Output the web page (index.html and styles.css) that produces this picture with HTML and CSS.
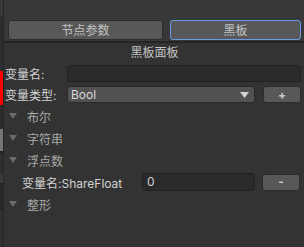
FILE: index.html
```html
<!DOCTYPE html>
<html>
<head>
<meta charset="utf-8">
<link rel="stylesheet" href="styles.css">
</head>
<body>
<div class="app">
  <div class="strip">
    <div class="s s-top"></div>
    <div class="s s-row"></div>
    <div class="s s-row"></div>
    <div class="s s-row"></div>
    <div class="s s-row"></div>
    <div class="s s-row2"></div>
    <div class="s s-red"></div>
    <div class="s s-dark"></div>
    <div class="s s-gray"></div>
    <div class="s s-dark2"></div>
    <div class="s s-mid"></div>
    <div class="s s-dark3"></div>
    <div class="s s-rest"></div>
  </div>
  <div class="main">
    <div class="header">
      <button class="tab tab-node">节点参数</button>
      <button class="tab tab-board active">黑板</button>
    </div>
    <div class="title">黑板面板</div>
    <div class="row row-name">
      <span class="label">变量名:</span>
      <div class="input wide"></div>
    </div>
    <div class="row row-type">
      <span class="label">变量类型:</span>
      <div class="dropdown"><span>Bool</span><svg class="arrow" width="9" height="6" viewBox="0 0 9 6"><path d="M0 0H9L4.5 6Z" fill="#d0d0d0"/></svg></div>
      <button class="btn small">+</button>
    </div>
    <div class="fold first"><span class="tri"></span>布尔</div>
    <div class="fold"><span class="tri"></span>字符串</div>
    <div class="fold"><span class="tri"></span>浮点数</div>
    <div class="row row-var">
      <span class="varlabel">变量名:ShareFloat</span>
      <div class="input value">0</div>
      <button class="btn small minus">-</button>
    </div>
    <div class="fold"><span class="tri"></span>整形</div>
  </div>
</div>
</body>
</html>
```
FILE: styles.css
```css
html, body {
  margin: 0;
  padding: 0;
  width: 304px;
  height: 247px;
  overflow: hidden;
  background: #333333;
  font-family: Inter, "Noto Sans CJK SC", sans-serif;
  font-size: 12px;
  color: #c4c4c4;
}
.app {
  display: flex;
  height: 247px;
}
.strip {
  width: 3px;
  border-right: 1px solid #262626;
  display: flex;
  flex-direction: column;
  flex: none;
}
.s { flex: none; }
.s-top { height: 17px; background: #3a3a3a; border-bottom: 1px solid #262626; }
.s-row { height: 10px; background: #2e2e2e; border-bottom: 1px solid #232323; }
.s-row2 { height: 9px; background: #2e2e2e; }
.s-red { height: 34px; background: #ff0000; }
.s-dark { height: 24px; background: #2b2b2b; }
.s-gray { height: 22px; background: #767676; border-bottom: 2px solid #202020; }
.s-dark2 { height: 20px; background: #2d2d2d; }
.s-mid { height: 10px; background: #3a3a3a; border-bottom: 2px solid #1f1f1f; }
.s-dark3 { height: 24px; background: #2a2a2a; border-bottom: 1px solid #1f1f1f; }
.s-rest { flex: 1; background: #303030; }
.main {
  flex: 1;
  display: flex;
  flex-direction: column;
}
.header {
  background: #383838;
  height: 43px;
  border-bottom: 2px solid #242424;
  box-sizing: border-box;
  display: flex;
  align-items: flex-start;
  padding: 20px 0 0 4px;
  gap: 7px;
}
.tab {
  height: 20px;
  box-sizing: border-box;
  background: #585858;
  border: 1px solid #2c2c2c;
  border-radius: 3px;
  color: #c4c4c4;
  font-family: inherit;
  font-size: 12px;
  padding: 0;
  line-height: 17px;
}
.tab-node { width: 155px; }
.tab-board { width: 131px; }
.tab.active {
  border: 1px solid #6c9ae6;
}
.title {
  text-align: center;
  height: 18px;
  line-height: 18px;
  padding-top: 1px;
  padding-left: 1px;
}
.row {
  display: flex;
  align-items: center;
  padding-left: 1px;
}
.label { width: 62px; color: #d2d2d2; }
.row-name { height: 17px; margin-top: 3px; }
.input {
  height: 17px;
  box-sizing: border-box;
  background: #2a2a2a;
  border: 1px solid #212121;
  border-radius: 3px;
}
.wide { width: 234px; }
.row-type { height: 17px; margin-top: 4px; }
.dropdown {
  width: 188px;
  height: 17px;
  box-sizing: border-box;
  background: #515151;
  border: 1px solid #2a2a2a;
  border-radius: 3px;
  display: flex;
  align-items: center;
  justify-content: space-between;
  padding: 0 3px 0 3px;
  color: #d8d8d8;
}
.arrow { margin-right: 2px; }
.btn {
  box-sizing: border-box;
  background: #585858;
  border: 1px solid #2c2c2c;
  border-radius: 3px;
  color: #c8c8c8;
  font-family: inherit;
  font-weight: bold;
  padding: 0;
}
.small {
  width: 38px;
  height: 17px;
  margin-left: 8px;
  font-size: 12px;
  line-height: 14px;
}
.fold {
  height: 22px;
  display: flex;
  align-items: center;
  padding-left: 5px;
  color: #a8a8a8;
}
.fold.first { margin-top: 2px; }
.tri {
  width: 0;
  height: 0;
  border-left: 4px solid transparent;
  border-right: 4px solid transparent;
  border-top: 6px solid #6a6a6a;
  margin-right: 10px;
}
.row-var { height: 22px; padding-left: 18px; }
.varlabel { width: 120px; color: #d2d2d2; }
.value {
  width: 113px;
  padding-left: 4px;
  line-height: 15px;
  color: #d0d0d0;
  height: 18px;
}
.minus { margin-left: 7px; }
```
